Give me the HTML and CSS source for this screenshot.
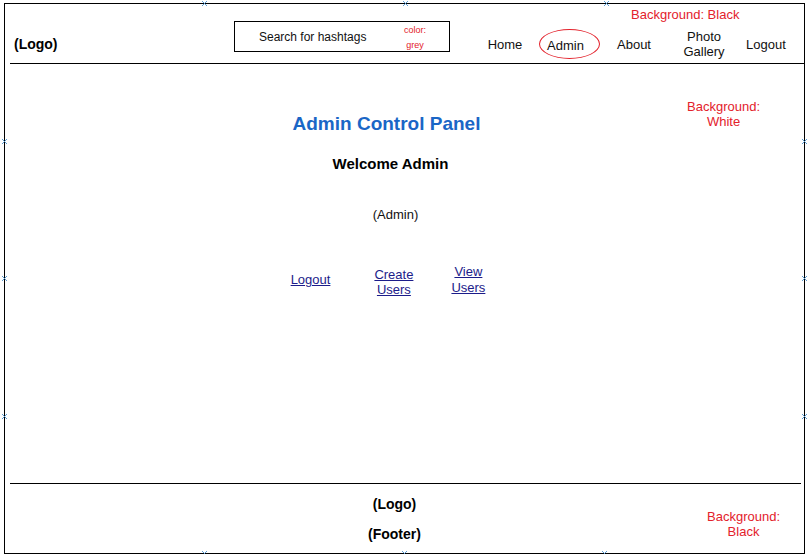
FILE: index.html
```html
<!DOCTYPE html>
<html lang="en">
<head>
<meta charset="utf-8">
<title>Admin Control Panel</title>
<link rel="stylesheet" href="styles.css">
</head>
<body>
<div class="frame">
  <header class="header">
    <div class="logo">(Logo)</div>
    <div class="search">
      <span class="search-text">Search for hashtags</span>
      <span class="note-small">color:<br>grey</span>
    </div>
    <nav class="nav">
      <a class="nav-item w-home">Home</a>
      <a class="nav-item w-admin"><span class="oval">Admin</span></a>
      <a class="nav-item w-about">About</a>
      <a class="nav-item w-photo">Photo<br>Gallery</a>
      <a class="nav-item w-logout">Logout</a>
    </nav>
  </header>

  <main class="main">
    <h1 class="title">Admin Control Panel</h1>
    <h2 class="welcome">Welcome Admin</h2>
    <p class="role">(Admin)</p>
    <div class="links">
      <a href="#" class="link l-logout">Logout</a>
      <a href="#" class="link l-create">Create<br>Users</a>
      <a href="#" class="link l-view">View<br>Users</a>
    </div>
  </main>

  <footer class="footer">
    <div class="footer-text">(Logo)</div>
    <div class="footer-text f-second">(Footer)</div>
  </footer>

  <div class="note note-header">Background: Black</div>
  <div class="note note-main">Background:<br>White</div>
  <div class="note note-footer">Background:<br>Black</div>

  <span class="mark m-t1"></span>
  <span class="mark m-t2"></span>
  <span class="mark m-t3"></span>
  <span class="mark m-l1"></span>
  <span class="mark m-l2"></span>
  <span class="mark m-l3"></span>
  <span class="mark m-r1"></span>
  <span class="mark m-r2"></span>
  <span class="mark m-r3"></span>
  <span class="mark m-b1"></span>
  <span class="mark m-b2"></span>
  <span class="mark m-b3"></span>
</div>
</body>
</html>
```

FILE: styles.css
```css
* { box-sizing: border-box; }

html, body {
  margin: 0;
  padding: 0;
  background: #ffffff;
}

body {
  font-family: "Liberation Sans", Arial, sans-serif;
  color: #000;
}

.frame {
  position: relative;
  margin: 3px 0 0 4px;
  width: 801px;
  height: 551px;
  border: 1px solid #000;
  display: flex;
  flex-direction: column;
}

/* Header */
.header {
  height: 60px;
  margin-left: 5px;
  border-bottom: 1px solid #000;
  display: flex;
  align-items: center;
  padding-top: 21px;
}

.logo {
  width: 224px;
  padding-left: 4px;
  font-size: 14px;
  font-weight: bold;
  line-height: 17px;
}

.search {
  align-self: flex-start;
  margin-top: -4px;
  width: 216px;
  height: 31px;
  border: 1px solid #000;
  display: flex;
  align-items: center;
  padding-left: 24px;
}

.search-text {
  font-size: 12px;
  line-height: 14px;
  color: #111;
  width: 143px;
}

.note-small {
  font-size: 9px;
  line-height: 15px;
  color: #e3212b;
  text-align: center;
  width: 26px;
  padding-top: 3px;
}

.nav {
  display: flex;
  align-items: center;
  margin-left: 25px;
}

.nav-item {
  font-size: 13px;
  line-height: 15px;
  text-align: center;
  color: #111;
  display: flex;
  justify-content: center;
}

.w-home { width: 60px; }
.w-admin { width: 68px; }
.w-about { width: 62px; }
.w-photo { width: 78px; margin-top: -1px; }
.w-logout { width: 46px; }

.oval {
  display: flex;
  align-items: center;
  justify-content: center;
  width: 61px;
  height: 30px;
  border: 1px solid #e3212b;
  border-radius: 50%;
  padding-right: 7px;
  padding-top: 2px;
}

/* Main */
.main {
  flex: 1;
  display: flex;
  flex-direction: column;
  align-items: center;
  padding-top: 49px;
  padding-right: 28px;
}

.title {
  margin: 0 8px 0 0;
  font-size: 19px;
  line-height: 22px;
  font-weight: bold;
  color: #1a66c6;
}

.welcome {
  margin: 20px 0 0;
  font-size: 15px;
  line-height: 18px;
  font-weight: bold;
}

.role {
  margin: 34px 0 0 10px;
  font-size: 13px;
  line-height: 16px;
  color: #111;
}

.links {
  display: flex;
  align-items: flex-start;
  margin-top: 41px;
  margin-right: 5px;
}

.link {
  font-size: 13px;
  line-height: 15px;
  color: #1c1c8a;
  text-align: center;
  text-decoration: underline;
}

.l-logout { padding-top: 8px; }
.l-create { margin-left: 44px; padding-top: 3px; }
.l-view { margin-left: 38px; line-height: 16px; }

/* Footer */
.footer {
  height: 70px;
  margin: 0 3px 0 5px;
  border-top: 1px solid #000;
  display: flex;
  flex-direction: column;
  align-items: center;
  padding-top: 12px;
  padding-right: 22px;
}

.footer-text {
  font-size: 14px;
  line-height: 17px;
  font-weight: bold;
}

.f-second { margin-top: 13px; }

/* Annotation notes (overlays) */
.note {
  position: absolute;
  color: #e3212b;
  font-size: 13px;
  line-height: 15px;
  text-align: center;
}

.note-header { top: 3px; left: 626px; }
.note-main { top: 95px; left: 682px; }
.note-footer { top: 505px; left: 702px; }

/* Canvas connection markers */
.mark {
  position: absolute;
  width: 5px;
  height: 5px;
  background:
    linear-gradient(45deg, transparent 42%, #5b9bd0 42%, #5b9bd0 58%, transparent 58%),
    linear-gradient(-45deg, transparent 42%, #5b9bd0 42%, #5b9bd0 58%, transparent 58%);
}

.m-t1 { top: -3px; left: 197px; }
.m-t2 { top: -3px; left: 398px; }
.m-t3 { top: -3px; left: 599px; }
.m-b1 { bottom: -3px; left: 197px; }
.m-b2 { bottom: -3px; left: 397px; }
.m-b3 { bottom: -3px; left: 597px; }
.m-l1 { left: -3px; top: 135px; }
.m-l2 { left: -3px; top: 272px; }
.m-l3 { left: -3px; top: 410px; }
.m-r1 { right: -3px; top: 135px; }
.m-r2 { right: -3px; top: 272px; }
.m-r3 { right: -3px; top: 410px; }
```
